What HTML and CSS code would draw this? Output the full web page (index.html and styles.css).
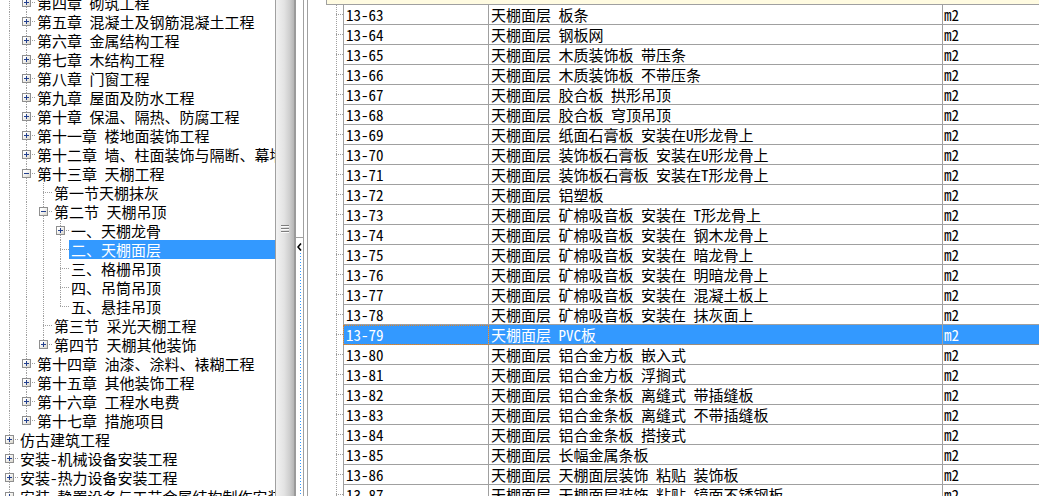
FILE: index.html
```html
<!doctype html>
<html lang="zh-CN">
<head>
  <meta charset="utf-8">
  <title>定额章节</title>
  <link rel="stylesheet" href="styles.css">
</head>
<body>

<div class="frame">

  <!-- chapter tree -->
  <div class="tree">
    <div class="tree-list">
      <div class="node"><i class="g v"></i><i class="g t"><b class="box plus"></b></i><span class="lbl">第四章 砌筑工程</span></div>
      <div class="node"><i class="g v"></i><i class="g t"><b class="box plus"></b></i><span class="lbl">第五章 混凝土及钢筋混凝土工程</span></div>
      <div class="node"><i class="g v"></i><i class="g t"><b class="box plus"></b></i><span class="lbl">第六章 金属结构工程</span></div>
      <div class="node"><i class="g v"></i><i class="g t"><b class="box plus"></b></i><span class="lbl">第七章 木结构工程</span></div>
      <div class="node"><i class="g v"></i><i class="g t"><b class="box plus"></b></i><span class="lbl">第八章 门窗工程</span></div>
      <div class="node"><i class="g v"></i><i class="g t"><b class="box plus"></b></i><span class="lbl">第九章 屋面及防水工程</span></div>
      <div class="node"><i class="g v"></i><i class="g t"><b class="box plus"></b></i><span class="lbl">第十章 保温、隔热、防腐工程</span></div>
      <div class="node"><i class="g v"></i><i class="g t"><b class="box plus"></b></i><span class="lbl">第十一章 楼地面装饰工程</span></div>
      <div class="node"><i class="g v"></i><i class="g t"><b class="box plus"></b></i><span class="lbl">第十二章 墙、柱面装饰与隔断、幕墙工程</span></div>
      <div class="node"><i class="g v"></i><i class="g t"><b class="box minus"></b></i><span class="lbl">第十三章 天棚工程</span></div>
      <div class="node"><i class="g v"></i><i class="g v"></i><i class="g t"></i><span class="lbl">第一节天棚抹灰</span></div>
      <div class="node"><i class="g v"></i><i class="g v"></i><i class="g t"><b class="box minus"></b></i><span class="lbl">第二节 天棚吊顶</span></div>
      <div class="node"><i class="g v"></i><i class="g v"></i><i class="g v"></i><i class="g t"><b class="box plus"></b></i><span class="lbl">一、天棚龙骨</span></div>
      <div class="node sel"><i class="g v"></i><i class="g v"></i><i class="g v"></i><i class="g t"></i><span class="lbl">二、天棚面层</span></div>
      <div class="node"><i class="g v"></i><i class="g v"></i><i class="g v"></i><i class="g t"></i><span class="lbl">三、格栅吊顶</span></div>
      <div class="node"><i class="g v"></i><i class="g v"></i><i class="g v"></i><i class="g t"></i><span class="lbl">四、吊筒吊顶</span></div>
      <div class="node"><i class="g v"></i><i class="g v"></i><i class="g v"></i><i class="g l"></i><span class="lbl">五、悬挂吊顶</span></div>
      <div class="node"><i class="g v"></i><i class="g v"></i><i class="g t"></i><span class="lbl">第三节 采光天棚工程</span></div>
      <div class="node"><i class="g v"></i><i class="g v"></i><i class="g l"><b class="box plus"></b></i><span class="lbl">第四节 天棚其他装饰</span></div>
      <div class="node"><i class="g v"></i><i class="g t"><b class="box plus"></b></i><span class="lbl">第十四章 油漆、涂料、裱糊工程</span></div>
      <div class="node"><i class="g v"></i><i class="g t"><b class="box plus"></b></i><span class="lbl">第十五章 其他装饰工程</span></div>
      <div class="node"><i class="g v"></i><i class="g t"><b class="box plus"></b></i><span class="lbl">第十六章 工程水电费</span></div>
      <div class="node"><i class="g v"></i><i class="g l"><b class="box plus"></b></i><span class="lbl">第十七章 措施项目</span></div>
      <div class="node"><i class="g t"><b class="box plus"></b></i><span class="lbl">仿古建筑工程</span></div>
      <div class="node"><i class="g t"><b class="box plus"></b></i><span class="lbl">安装-机械设备安装工程</span></div>
      <div class="node"><i class="g t"><b class="box plus"></b></i><span class="lbl">安装-热力设备安装工程</span></div>
      <div class="node"><i class="g t"><b class="box plus"></b></i><span class="lbl">安装-静置设备与工艺金属结构制作安装工程</span></div>
    </div>
  </div>

  <!-- splitter -->
  <div class="line"></div>
  <div class="split"><div class="grip"></div></div>
  <div class="split-edge"></div>
  <div class="fold">
    <div class="fold-top"></div>
    <div class="fold-btn">
      <svg width="5" height="8" viewBox="0 0 5 8"><polyline points="4,0.5 1,4 4,7.5" fill="none" stroke="#000" stroke-width="1.6"/></svg>
    </div>
    <div class="fold-dots"></div>
  </div>
  <div class="line"></div>
  <div class="gap3"></div>
  <div class="line"></div>

  <!-- quota items -->
  <div class="grid-pane">
    <div class="rows">
      <div class="parent">二、天棚面层</div>
      <div class="row"><i class="rg"></i><span class="c code">13-63</span><span class="c name">天棚面层 板条</span><span class="c unit">m2</span></div>
      <div class="row"><i class="rg"></i><span class="c code">13-64</span><span class="c name">天棚面层 钢板网</span><span class="c unit">m2</span></div>
      <div class="row"><i class="rg"></i><span class="c code">13-65</span><span class="c name">天棚面层 木质装饰板 带压条</span><span class="c unit">m2</span></div>
      <div class="row"><i class="rg"></i><span class="c code">13-66</span><span class="c name">天棚面层 木质装饰板 不带压条</span><span class="c unit">m2</span></div>
      <div class="row"><i class="rg"></i><span class="c code">13-67</span><span class="c name">天棚面层 胶合板 拱形吊顶</span><span class="c unit">m2</span></div>
      <div class="row"><i class="rg"></i><span class="c code">13-68</span><span class="c name">天棚面层 胶合板 穹顶吊顶</span><span class="c unit">m2</span></div>
      <div class="row"><i class="rg"></i><span class="c code">13-69</span><span class="c name">天棚面层 纸面石膏板 安装在U形龙骨上</span><span class="c unit">m2</span></div>
      <div class="row"><i class="rg"></i><span class="c code">13-70</span><span class="c name">天棚面层 装饰板石膏板 安装在U形龙骨上</span><span class="c unit">m2</span></div>
      <div class="row"><i class="rg"></i><span class="c code">13-71</span><span class="c name">天棚面层 装饰板石膏板 安装在T形龙骨上</span><span class="c unit">m2</span></div>
      <div class="row"><i class="rg"></i><span class="c code">13-72</span><span class="c name">天棚面层 铝塑板</span><span class="c unit">m2</span></div>
      <div class="row"><i class="rg"></i><span class="c code">13-73</span><span class="c name">天棚面层 矿棉吸音板 安装在 T形龙骨上</span><span class="c unit">m2</span></div>
      <div class="row"><i class="rg"></i><span class="c code">13-74</span><span class="c name">天棚面层 矿棉吸音板 安装在 钢木龙骨上</span><span class="c unit">m2</span></div>
      <div class="row"><i class="rg"></i><span class="c code">13-75</span><span class="c name">天棚面层 矿棉吸音板 安装在 暗龙骨上</span><span class="c unit">m2</span></div>
      <div class="row"><i class="rg"></i><span class="c code">13-76</span><span class="c name">天棚面层 矿棉吸音板 安装在 明暗龙骨上</span><span class="c unit">m2</span></div>
      <div class="row"><i class="rg"></i><span class="c code">13-77</span><span class="c name">天棚面层 矿棉吸音板 安装在 混凝土板上</span><span class="c unit">m2</span></div>
      <div class="row"><i class="rg"></i><span class="c code">13-78</span><span class="c name">天棚面层 矿棉吸音板 安装在 抹灰面上</span><span class="c unit">m2</span></div>
      <div class="row sel"><i class="rg"></i><span class="c code">13-79</span><span class="c name">天棚面层 PVC板</span><span class="c unit">m2</span></div>
      <div class="row"><i class="rg"></i><span class="c code">13-80</span><span class="c name">天棚面层 铝合金方板 嵌入式</span><span class="c unit">m2</span></div>
      <div class="row"><i class="rg"></i><span class="c code">13-81</span><span class="c name">天棚面层 铝合金方板 浮搁式</span><span class="c unit">m2</span></div>
      <div class="row"><i class="rg"></i><span class="c code">13-82</span><span class="c name">天棚面层 铝合金条板 离缝式 带插缝板</span><span class="c unit">m2</span></div>
      <div class="row"><i class="rg"></i><span class="c code">13-83</span><span class="c name">天棚面层 铝合金条板 离缝式 不带插缝板</span><span class="c unit">m2</span></div>
      <div class="row"><i class="rg"></i><span class="c code">13-84</span><span class="c name">天棚面层 铝合金条板 搭接式</span><span class="c unit">m2</span></div>
      <div class="row"><i class="rg"></i><span class="c code">13-85</span><span class="c name">天棚面层 长幅金属条板</span><span class="c unit">m2</span></div>
      <div class="row"><i class="rg"></i><span class="c code">13-86</span><span class="c name">天棚面层 天棚面层装饰 粘贴 装饰板</span><span class="c unit">m2</span></div>
      <div class="row"><i class="rg"></i><span class="c code">13-87</span><span class="c name">天棚面层 天棚面层装饰 粘贴 镜面不锈钢板</span><span class="c unit">m2</span></div>
    </div>
  </div>

</div>

</body>
</html>
```

FILE: styles.css
```css
* {
  box-sizing: border-box;
}

body {
  margin: 0;
  width: 1039px;
  height: 496px;
  overflow: hidden;
  background: #fff;
  color: #000;
  font-family: "Noto Sans Mono CJK SC", "Liberation Mono", "Noto Sans CJK SC", monospace;
  font-size: 15px;
  line-height: 19px;
}

.frame {
  display: flex;
  height: 496px;
}

/* ---- tree ---- */
.tree {
  width: 275px;
  flex: none;
  overflow: hidden;
}
.tree-list {
  margin-top: -7px;
}
.node {
  display: flex;
  height: 19px;
  white-space: nowrap;
}
.lbl {
  flex: none;
  padding: 0 2px;
}
.node.sel .lbl {
  flex: 1 0 auto;
  background: #3399ff;
  color: #fff;
}

/* guide cells: v = line through, t = tee, l = last child */
.g {
  width: 17px;
  height: 19px;
  flex: none;
  display: flex;
  align-items: center;
  background-repeat: no-repeat;
}
.g.v {
  background-image: repeating-linear-gradient(to bottom, #a0a0a0 0 1px, transparent 1px 2px);
  background-position: 9px 0;
  background-size: 1px 100%;
}
.g.t {
  background-image:
    repeating-linear-gradient(to bottom, #a0a0a0 0 1px, transparent 1px 2px),
    repeating-linear-gradient(to right, #a0a0a0 0 1px, transparent 1px 2px);
  background-position: 9px 0, 9px 9px;
  background-size: 1px 100%, 9px 1px;
}
.g.l {
  background-image:
    repeating-linear-gradient(to bottom, #a0a0a0 0 1px, transparent 1px 2px),
    repeating-linear-gradient(to right, #a0a0a0 0 1px, transparent 1px 2px);
  background-position: 9px 0, 9px 9px;
  background-size: 1px 10px, 9px 1px;
}
.node .g:last-of-type {
  width: 18px;
}

.box {
  width: 9px;
  height: 9px;
  margin-left: 5px;
  border: 1px solid #8f8f8f;
  background-repeat: no-repeat;
}
.box.plus {
  background-image:
    linear-gradient(#23408e, #23408e),
    linear-gradient(#23408e, #23408e),
    linear-gradient(135deg, #fff 20%, #d9d6cc);
  background-position: center, center, 0 0;
  background-size: 5px 1px, 1px 5px, 100% 100%;
}
.box.minus {
  background-image:
    linear-gradient(#23408e, #23408e),
    linear-gradient(135deg, #fff 20%, #d9d6cc);
  background-position: center, 0 0;
  background-size: 5px 1px, 100% 100%;
}

/* ---- splitter ---- */
.line {
  width: 1px;
  flex: none;
  background: #a0a0a0;
}
.split {
  width: 18px;
  flex: none;
  display: flex;
  flex-direction: column;
  align-items: center;
  padding-top: 225px;
  background: linear-gradient(to right, #f2f2f2, #e3e3e3 45%, #cfcfcf 75%, #b5b5b5);
}
.grip {
  width: 8px;
  height: 8px;
  background: repeating-linear-gradient(to bottom, #7d7d7d 0 1px, #fafafa 1px 2px, transparent 2px 3px);
}
.split-edge {
  width: 2px;
  flex: none;
  background: #9a9a9a;
}
.fold {
  width: 7px;
  flex: none;
  display: flex;
  flex-direction: column;
}
.fold-top {
  height: 237px;
  flex: none;
}
.fold-btn {
  border-top: 1px solid #a0a0a0;
  display: flex;
  justify-content: center;
  padding: 5px 0 2px;
}
.fold-btn svg {
  display: block;
}
.fold-dots {
  flex: 1;
  background: repeating-linear-gradient(to bottom, #3399ff 0 1px, transparent 1px 3px) 4px 0 / 1px 100% no-repeat;
}
.gap3 {
  width: 3px;
  flex: none;
}

/* ---- item grid ---- */
.grid-pane {
  flex: 1;
  overflow: hidden;
}
.rows {
  margin-top: -15px;
}
.parent {
  margin-left: 18px;
  height: 20px;
  padding-left: 16px;
  line-height: 14px;
  background: #fffbe1;
  border-left: 1px solid #a0a0a0;
  border-bottom: 1px solid #a0a0a0;
  white-space: nowrap;
  overflow: hidden;
}
.row {
  display: flex;
  height: 20px;
}
.rg {
  width: 17px;
  margin-left: 18px;
  flex: none;
  background-image:
    repeating-linear-gradient(to bottom, #a0a0a0 0 1px, transparent 1px 2px),
    repeating-linear-gradient(to right, #a0a0a0 0 1px, transparent 1px 2px);
  background-position: 10px 0, 10px 9px;
  background-size: 1px 100%, 7px 1px;
  background-repeat: no-repeat;
}
.c {
  flex: none;
  height: 20px;
  padding-left: 2px;
  border-right: 1px solid #a0a0a0;
  border-bottom: 1px solid #a0a0a0;
  white-space: nowrap;
  overflow: hidden;
}
.code {
  width: 146px;
  border-left: 1px solid #a0a0a0;
}
.name {
  width: 454px;
}
.unit {
  width: 200px;
  padding-left: 1px;
}
.row.sel .c {
  background: #3399ff;
  color: #fff;
  border-bottom-color: #9a8c7e;
}
.row.sel .code {
  outline: 1px dotted #d9822b;
  outline-offset: -1px;
}
```
